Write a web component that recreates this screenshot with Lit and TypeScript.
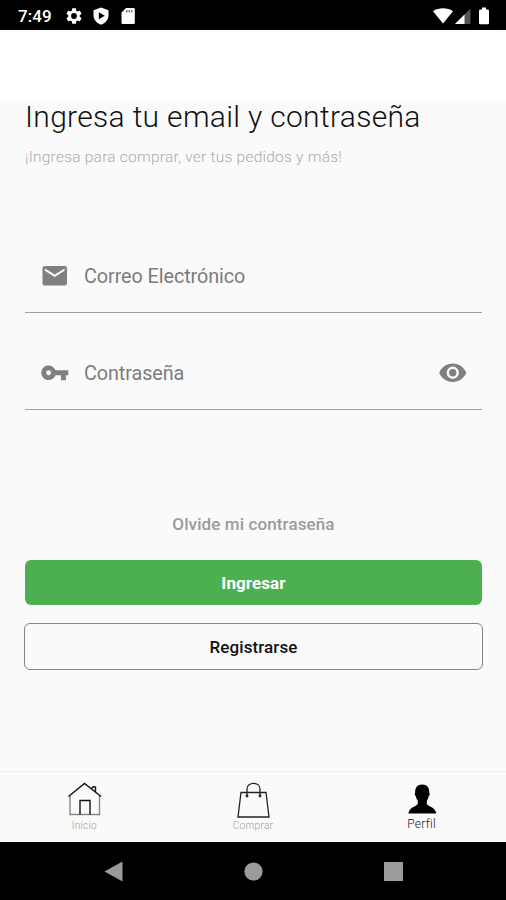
import { LitElement, html, css, svg } from "lit";
import { customElement, property } from "lit/decorators.js";

@customElement("status-bar")
class StatusBar extends LitElement {
  static styles = css`
    :host { display: flex; align-items: center; box-sizing: border-box; height: 29.5px; background: #000; color: #fff; padding: 2px 16px 0 18px; font: 500 17px/28px Roboto, sans-serif; }
    .time { width: 48px; white-space: nowrap; letter-spacing: 0.1px; }
    .gear { width: 16px; height: 16px; margin-right: 10px; }
    .shield { width: 18px; height: 18px; margin-right: 9px; }
    .card { width: 18px; height: 18px; }
    .grow { flex: 1; }
    .wifi { width: 20px; height: 16px; margin-right: 2px; }
    .signal { width: 16px; height: 16px; margin-right: 7px; }
    .battery { width: 12px; height: 18px; }
  `;
  render() {
    return html`
      <span class="time">7:49</span>
      <svg class="gear" viewBox="2 2 20 20" fill="#fff"><path d="M19.14 12.94c.04-.3.06-.61.06-.94 0-.32-.02-.64-.07-.94l2.03-1.58a.49.49 0 0 0 .12-.61l-1.92-3.32a.49.49 0 0 0-.59-.22l-2.39.96a7 7 0 0 0-1.62-.94l-.36-2.54a.48.48 0 0 0-.48-.41h-3.84a.48.48 0 0 0-.47.41l-.36 2.54c-.59.24-1.13.57-1.62.94l-2.39-.96a.48.48 0 0 0-.59.22L2.74 8.87a.48.48 0 0 0 .12.61l2.03 1.58a6 6 0 0 0 0 1.88l-2.03 1.58a.49.49 0 0 0-.12.61l1.92 3.32c.12.22.37.29.59.22l2.39-.96c.5.38 1.03.7 1.62.94l.36 2.54c.05.24.24.41.48.41h3.84c.24 0 .44-.17.47-.41l.36-2.54a7 7 0 0 0 1.62-.94l2.39.96c.22.08.47 0 .59-.22l1.92-3.32a.48.48 0 0 0-.12-.61zM12 15.6a3.6 3.6 0 1 1 0-7.2 3.6 3.6 0 0 1 0 7.2z"/></svg>
      <svg class="shield" viewBox="0 0 18 18"><path fill="#fff" d="M9 .5l7.500 2.800v5.200c0 4.200-3.200 7.600-7.500 9.200-4.300-1.600-7.500-5-7.500-9.200V3.300z"/><path fill="#000" d="M6.800 5.200l6 3.500-6 3.500z"/></svg>
      <svg class="card" viewBox="0 0 18 18"><path fill="#fff" d="M7 1h7.500a1.300 1.300 0 0 1 1.300 1.300v13.400a1.300 1.300 0 0 1-1.300 1.300H3.800a1.300 1.300 0 0 1-1.300-1.300V5.500z"/><path stroke="#666" stroke-width="1.300" d="M7.800 3v2.500M10.300 3v2.500M12.800 3v2.500"/></svg>
      <span class="grow"></span>
      <svg class="wifi" viewBox="0 0 20 16" fill="#fff"><path d="M0 3.200C5.500-.6 14.500-.6 20 3.200L10 15.600z"/></svg>
      <svg class="signal" viewBox="0 0 16 16"><path fill="#555" d="M15.500.5V16H0z"/><path fill="#fff" d="M9.500 6.500V16H0z"/></svg>
      <svg class="battery" viewBox="0 0 12 18"><path fill="#fff" d="M4 .5h4V2.500h1.800a1.200 1.200 0 0 1 1.200 1.200v12.300a1.200 1.200 0 0 1-1.200 1.200H2.200A1.200 1.200 0 0 1 1 16V3.700a1.200 1.200 0 0 1 1.200-1.200H4z"/></svg>
    `;
  }
}

const FIELD_ICONS = {
  mail: svg`<path d="M20 4H4a2 2 0 0 0-1.990 2L2 18c0 1.100.9 2 2 2h16a2 2 0 0 0 2-2V6a2 2 0 0 0-2-2zm0 4l-8 5-8-5V6l8 5 8-5z"/>`,
  key: svg`<path d="M12.650 10A6 6 0 0 0 1 12a6 6 0 0 0 11.650 2H17v4h4v-4h2v-4zM7 14a2 2 0 1 1 0-4 2 2 0 0 1 0 4z"/>`,
  eye: svg`<path d="M12 4.500C7 4.500 2.730 7.610 1 12c1.730 4.390 6 7.500 11 7.500s9.270-3.110 11-7.500c-1.730-4.390-6-7.500-11-7.500zM12 17a5 5 0 1 1 0-10 5 5 0 0 1 0 10zm0-8a3 3 0 1 0 0 6 3 3 0 0 0 0-6z"/>`,
};

@customElement("text-field")
class TextField extends LitElement {
  @property() label = "";
  @property() icon: keyof typeof FIELD_ICONS = "mail";
  @property({ type: Boolean }) reveal = false;
  static styles = css`
    :host { display: flex; align-items: center; box-sizing: border-box; height: 74px; padding: 0 15px; border-bottom: 1.500px solid #a0a0a0; }
    svg { width: 29.500px; height: 29.500px; fill: #808080; }
    .label { flex: 1; margin-left: 14.500px; padding-top: 2px; font: 400 19.800px/28px Roboto, sans-serif; letter-spacing: -0.070px; color: #7c7c7c; }
  `;
  render() {
    return html`
      <svg viewBox="0 0 24 24">${FIELD_ICONS[this.icon]}</svg>
      <span class="label">${this.label}</span>
      ${this.reveal ? html`<svg viewBox="0 0 24 24">${FIELD_ICONS.eye}</svg>` : ""}
    `;
  }
}

@customElement("app-root")
class AppRoot extends LitElement {
  static styles = css`
    :host { display: flex; flex-direction: column; height: 900px; background: #fafafa; font-family: Roboto, sans-serif; color: #111; }
    .appbar { height: 70.500px; background: #fff; }
    .page { flex: 1; display: flex; flex-direction: column; padding: 0 24px 0 25px; }
    h1 { margin: -1px 0 0; font-weight: 300; font-size: 30px; line-height: 35px; letter-spacing: 0.320px; white-space: nowrap; }
    .sub { margin: 12px 0 0; font-weight: 300; font-size: 15.500px; line-height: 22px; letter-spacing: 0.230px; color: #aaa; white-space: nowrap; }
    .fields { display: flex; flex-direction: column; gap: 23px; margin-top: 71px; }
    .forgot { margin-top: 103px; text-align: center; font-weight: 500; font-size: 17px; line-height: 22px; letter-spacing: 0.110px; color: #9b9b9b; }
    .btn { display: flex; align-items: center; justify-content: center; box-sizing: border-box; border-radius: 6px; font-family: inherit; font-size: 17px; letter-spacing: 0.100px; padding: 1px 0 0; }
    .primary { height: 45px; margin-top: 25px; border: 0; background: #4caf50; color: #fff; font-weight: 700; }
    .outline { height: 47px; margin: 18px -1px 0; border: 1.500px solid #858585; background: transparent; color: #111; font-weight: 500; }
    .tabs { display: grid; grid-template-columns: repeat(3, 1fr); box-sizing: border-box; height: 71px; border-top: 1px solid #efefef; }
    .tab { display: flex; flex-direction: column; align-items: center; padding-top: 9px; font-size: 10px; line-height: 14px; font-weight: 300; letter-spacing: 0.300px; color: #999; }
    .tab svg { width: 36px; height: 38px; }
    .active { color: #222; font-size: 12px; font-weight: 300; }
    .active svg { margin-bottom: -2px; }
    .system { display: flex; align-items: center; justify-content: center; gap: 121px; height: 58px; background: #000; }
    .system svg { width: 19px; height: 21px; fill: #9b9b9b; }
  `;
  render() {
    return html`
      <status-bar></status-bar>
      <div class="appbar"></div>
      <main class="page">
        <h1>Ingresa tu email y contraseña</h1>
        <p class="sub">¡Ingresa para comprar, ver tus pedidos y más!</p>
        <div class="fields">
          <text-field icon="mail" label="Correo Electrónico"></text-field>
          <text-field icon="key" label="Contraseña" reveal></text-field>
        </div>
        <div class="forgot">Olvide mi contraseña</div>
        <button class="btn primary">Ingresar</button>
        <button class="btn outline">Registrarse</button>
      </main>
      <nav class="tabs">
        <div class="tab">
          <svg viewBox="0 0 36 38" fill="none" stroke="#111" stroke-width="1.400"><path stroke="#888" d="M4 15v18.500h10M24 33.500h9.500V15M13.500 33.500H24"/><path d="M2.500 15.500L18.500 2.500l16.500 13M25.500 7.500L27.500 5.500l2 .5v4.500M14 33.500v-14H24v14"/></svg>
          <span>Inicio</span>
        </div>
        <div class="tab">
          <svg viewBox="0 0 36 38" fill="none" stroke="#222" stroke-width="1.300"><path d="M6 11.500h25l3 24.500H3z"/><path d="M12 15V8c0-7.500 13-7.500 13 0v7"/><circle cx="12" cy="15" r=".8"/><circle cx="25" cy="15" r=".8"/></svg>
          <span>Comprar</span>
        </div>
        <div class="tab active">
          <svg viewBox="0 0 36 38" fill="#000"><path d="M18.200 3.500c5 0 7.300 3.500 7.100 8 .8.500.5 3-.6 3.800-.4 2-1 3.400-1.900 4.400V23c1.500 2.500 8.500 3 9.400 9.500H4.400C5.300 26 12.300 25.500 13.800 23v-3.300c-.9-1-1.600-2.400-2-4.400-1.100-.8-1.400-3.300-.6-3.800-.2-4.500 2-8 7-8z"/></svg>
          <span>Perfil</span>
        </div>
      </nav>
      <footer class="system">
        <svg viewBox="0 0 20 22"><path d="M19.500.5v21L.5 11z"/></svg>
        <svg viewBox="0 0 20 22"><circle cx="10" cy="11" r="9.600"/></svg>
        <svg viewBox="0 0 20 22"><path d="M0 1h20v20H0z"/></svg>
      </footer>
    `;
  }
}
